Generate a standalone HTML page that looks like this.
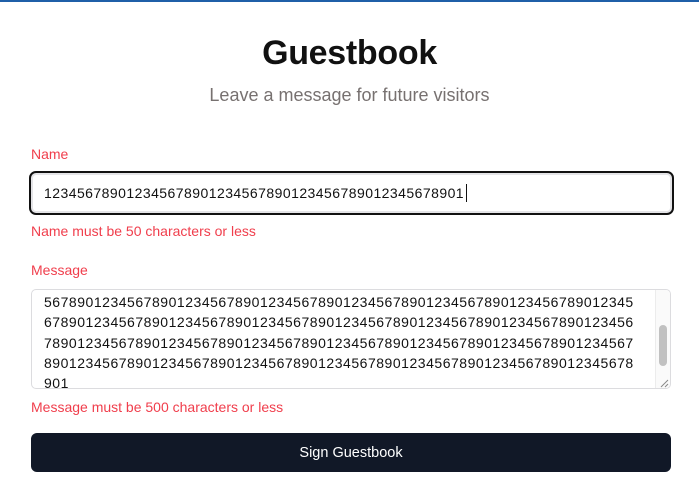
<!DOCTYPE html>
<html><head><meta charset="utf-8"><style>
html,body{margin:0;padding:0;width:699px;height:479px;overflow:hidden;background:#fff;font-family:"Liberation Sans",sans-serif;}
.top{position:absolute;left:0;top:0;width:699px;height:2px;background:#1f5fa8;}
.abs{position:absolute;white-space:nowrap;}
h1{position:absolute;left:0;width:699px;top:34px;margin:0;text-align:center;font-size:34px;font-weight:bold;color:#111;letter-spacing:-0.3px;}
.sub{left:0;width:699px;top:85px;text-align:center;font-size:18px;color:#777170;}
.red{color:#f03e4c;font-size:14px;}
.input{position:absolute;left:29px;top:171px;width:641px;height:40px;border:2px solid #111;border-radius:7px;box-shadow:inset 0 0 0 2px #e4e4e7;}
.num{font-size:14px;color:#111;letter-spacing:0.45px;}
.ta{position:absolute;left:31px;top:289px;width:638px;height:98px;border:1px solid #dcdcdf;border-radius:5px;overflow:hidden;}
.btn{position:absolute;left:31px;top:433px;width:640px;height:39px;background:#111827;border-radius:6px;color:#fff;font-size:14.5px;text-align:center;line-height:41px;}
</style></head><body>
<div class="top"></div>
<h1>Guestbook</h1>
<div class="abs sub">Leave a message for future visitors</div>
<div class="abs red" style="left:31px;top:146px;">Name</div>
<div class="input"></div>
<div class="abs num" style="left:44px;top:185px;">123456789012345678901234567890123456789012345678901</div>
<div class="abs" style="left:466px;top:184px;width:1px;height:18px;background:#111;"></div>
<div class="abs red" style="left:31px;top:223px;">Name must be 50 characters or less</div>
<div class="abs red" style="left:31px;top:262px;">Message</div>
<div class="ta">
<div class="abs num" style="left:12px;top:2px;line-height:20.3px;letter-spacing:0.52px;">56789012345678901234567890123456789012345678901234567890123456789012345<br>67890123456789012345678901234567890123456789012345678901234567890123456<br>78901234567890123456789012345678901234567890123456789012345678901234567<br>89012345678901234567890123456789012345678901234567890123456789012345678<br>901</div>
<div class="abs" style="left:623px;top:0;width:15px;height:98px;background:#fafafa;border-left:1px solid #ececec;"></div>
<div class="abs" style="left:627px;top:35px;width:8px;height:41px;background:#c1c1c1;border-radius:4px;"></div>
<svg class="abs" style="left:627px;top:88px" width="10" height="10"><path d="M2 9L9 2M6 9L9 6" stroke="#888" stroke-width="1"/></svg>
</div>
<div class="abs red" style="left:31px;top:399px;">Message must be 500 characters or less</div>
<div class="btn">Sign Guestbook</div>
</body></html>
